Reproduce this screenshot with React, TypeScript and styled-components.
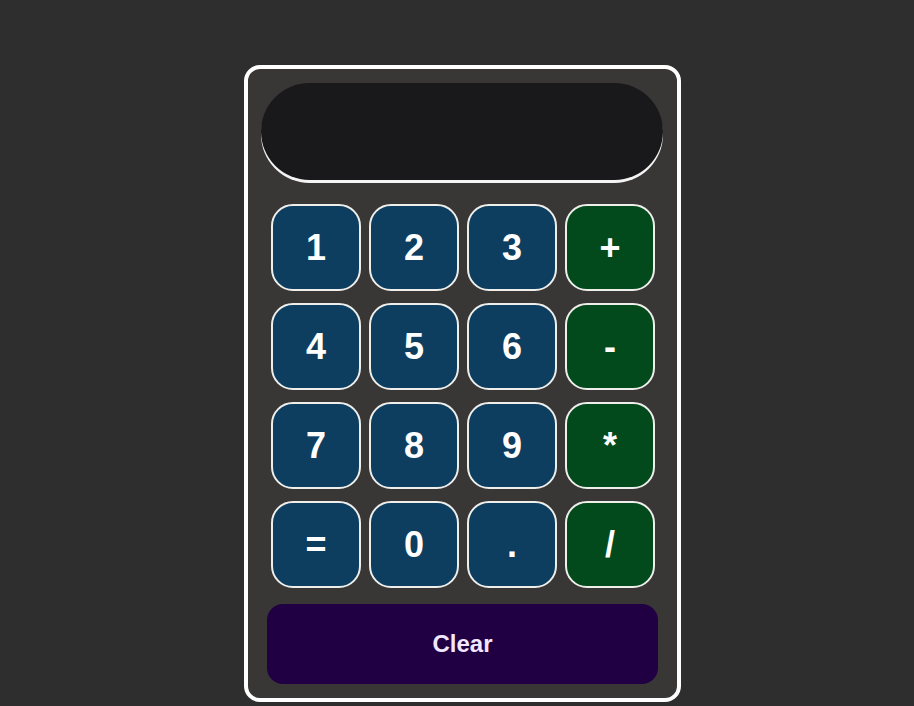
import React from "react";
import styled, { createGlobalStyle } from "styled-components";

const Global = createGlobalStyle`
  html, body { margin: 0; padding: 0; background: #2e2e2e; }
  body { font-family: "Liberation Sans", Arial, sans-serif; min-height: 706px; }
`;

const Page = styled.div`
  display: flex;
  justify-content: center;
  padding: 65px 0 0 11px;
  box-sizing: border-box;
  min-height: 706px;
`;

const Calculator = styled.div`
  width: 437px;
  height: 637px;
  box-sizing: border-box;
  border: 4px solid #ffffff;
  border-radius: 16px;
  background: #393636;
  padding: 14px 14px 14px 13px;
  display: flex;
  flex-direction: column;
`;

const Display = styled.div`
  height: 97px;
  border-radius: 50px;
  background: #19191b;
  box-shadow: 0 3px 0 #f4f4f4;
  color: #fff;
  font-size: 36px;
  display: flex;
  align-items: center;
  justify-content: flex-end;
  padding: 0 40px;
`;

const Keys = styled.div`
  display: grid;
  grid-template-columns: repeat(4, 90px);
  grid-auto-rows: 87px;
  column-gap: 8px;
  row-gap: 12px;
  margin: 24px 0 0 10px;
`;

const Key = styled.button<{ $op?: boolean }>`
  box-sizing: border-box;
  background: ${(p) => (p.$op ? "#024a1c" : "#0d3d5f")};
  border: 2px solid #eeeeea;
  border-radius: 22px;
  color: #ffffff;
  font-family: "Liberation Sans", Arial, sans-serif;
  font-weight: 700;
  font-size: 36px;
  display: flex;
  align-items: center;
  justify-content: center;
  padding: 0;
  cursor: pointer;
`;

const ClearButton = styled.button`
  margin: 16px 5px 0 6px;
  height: 80px;
  border: none;
  border-radius: 16px;
  background: #200042;
  color: #f1e8ff;
  font-family: "Liberation Sans", Arial, sans-serif;
  font-weight: 700;
  font-size: 24px;
  cursor: pointer;
`;

const keys: { label: string; op?: boolean }[] = [
  { label: "1" }, { label: "2" }, { label: "3" }, { label: "+", op: true },
  { label: "4" }, { label: "5" }, { label: "6" }, { label: "-", op: true },
  { label: "7" }, { label: "8" }, { label: "9" }, { label: "*", op: true },
  { label: "=" }, { label: "0" }, { label: "." }, { label: "/", op: true },
];

export default function App() {
  return (
    <>
      <Global />
      <Page>
        <Calculator>
          <Display />
          <Keys>
            {keys.map((k) => (
              <Key key={k.label} $op={k.op}>
                {k.label}
              </Key>
            ))}
          </Keys>
          <ClearButton>Clear</ClearButton>
        </Calculator>
      </Page>
    </>
  );
}
